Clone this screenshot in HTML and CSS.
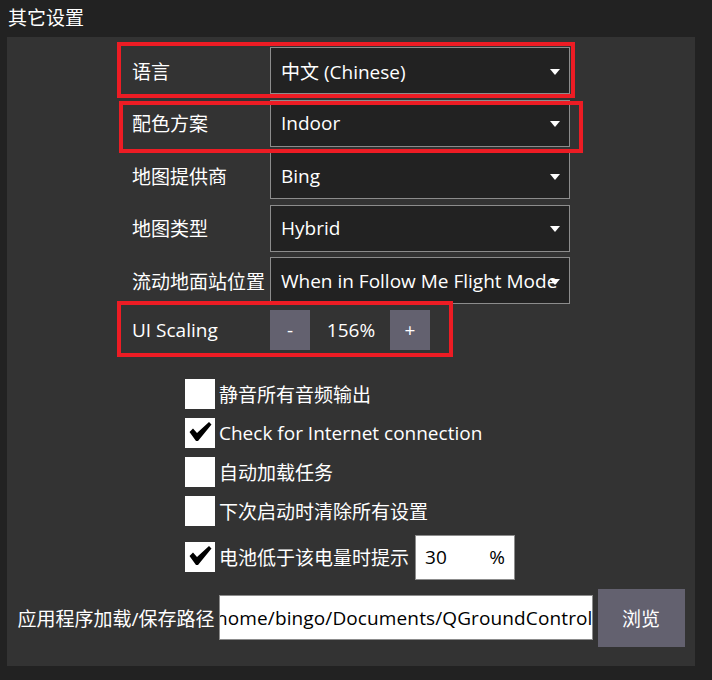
FILE: index.html
```html
<!DOCTYPE html>
<html>
<head>
<meta charset="utf-8">
<link rel="stylesheet" href="styles.css">
</head>
<body>
<div class="page">
  <div class="title">其它设置</div>
  <div class="panel">
    <div class="form">
      <div class="label">语言</div>
      <div class="combo"><span class="combo-text">中文 (Chinese)</span><svg class="arrow" viewBox="0 0 10 6"><polygon points="0,0 10,0 5,6"/></svg></div>
      <div class="label">配色方案</div>
      <div class="combo"><span class="combo-text">Indoor</span><svg class="arrow" viewBox="0 0 10 6"><polygon points="0,0 10,0 5,6"/></svg></div>
      <div class="label">地图提供商</div>
      <div class="combo"><span class="combo-text">Bing</span><svg class="arrow" viewBox="0 0 10 6"><polygon points="0,0 10,0 5,6"/></svg></div>
      <div class="label">地图类型</div>
      <div class="combo"><span class="combo-text">Hybrid</span><svg class="arrow" viewBox="0 0 10 6"><polygon points="0,0 10,0 5,6"/></svg></div>
      <div class="label">流动地面站位置</div>
      <div class="combo"><span class="combo-text">When in Follow Me Flight Mode</span><svg class="arrow" viewBox="0 0 10 6"><polygon points="0,0 10,0 5,6"/></svg></div>
      <div class="label">UI Scaling</div>
      <div class="scale">
        <div class="btn sq">-</div>
        <div class="scale-value">156%</div>
        <div class="btn sq">+</div>
      </div>
    </div>

    <div class="checks">
      <div class="check"><span class="box"></span><span class="check-text">静音所有音频输出</span></div>
      <div class="check"><span class="box"><svg class="tick" viewBox="0 0 30 30"><polygon points="4.5,14 8,10.5 12,15 24,4 26.5,6.5 13,23 11,23"/></svg></span><span class="check-text">Check for Internet connection</span></div>
      <div class="check"><span class="box"></span><span class="check-text">自动加载任务</span></div>
      <div class="check"><span class="box"></span><span class="check-text">下次启动时清除所有设置</span></div>
      <div class="check battery"><span class="box"><svg class="tick" viewBox="0 0 30 30"><polygon points="4.5,14 8,10.5 12,15 24,4 26.5,6.5 13,23 11,23"/></svg></span><span class="check-text">电池低于该电量时提示</span>
        <div class="num"><span>30</span><span>%</span></div>
      </div>
    </div>

    <div class="pathrow">
      <div class="path-label">应用程序加载/保存路径</div>
      <div class="path-input"><span>/home/bingo/Documents/QGroundControl</span></div>
      <div class="btn browse">浏览</div>
    </div>
  </div>

  <div class="mark m1"></div>
  <div class="mark m2"></div>
  <div class="mark m3"></div>
</div>
</body>
</html>
```

FILE: styles.css
```css
* { box-sizing: border-box; }

html, body {
  margin: 0;
  padding: 0;
  background: #222222;
}

body {
  font-family: "Open Sans", "Noto Sans CJK SC", sans-serif;
  font-size: 19px;
  color: #ffffff;
}

.page {
  position: relative;
  width: 712px;
  height: 680px;
  overflow: hidden;
  background: #222222;
}

.title {
  height: 37px;
  padding-left: 8px;
  line-height: 37px;
}

.panel {
  margin-left: 7px;
  width: 688px;
  height: 629px;
  background: #333333;
  padding-top: 10px;
  display: flex;
  flex-direction: column;
  align-items: center;
}

.form {
  display: grid;
  grid-template-columns: 134px 300px;
  grid-template-rows: 47px 47px 47px 47px 47px 40px;
  column-gap: 4px;
  row-gap: 5.5px;
  align-items: center;
}

.label {
  white-space: nowrap;
}

.combo {
  position: relative;
  height: 47px;
  background: #222222;
  border: 1px solid #8c8c8c;
  display: flex;
  align-items: center;
  padding-left: 10px;
  white-space: nowrap;
  overflow: hidden;
}

.arrow {
  position: absolute;
  right: 9px;
  top: 50%;
  width: 10px;
  height: 6px;
  margin-top: -2px;
  fill: #ffffff;
}

.scale {
  display: flex;
  align-items: center;
  height: 40px;
}

.btn {
  background: #63616f;
  color: #ffffff;
  display: flex;
  align-items: center;
  justify-content: center;
}

.sq {
  width: 40px;
  height: 40px;
}

.scale-value {
  width: 80px;
  text-align: center;
  padding-left: 2px;
}

.checks {
  margin-top: 29px;
  width: 332px;
  display: flex;
  flex-direction: column;
  gap: 9px;
}

.check {
  display: flex;
  align-items: center;
  height: 30px;
  white-space: nowrap;
}

.check.battery {
  height: 45px;
}

.box {
  width: 30px;
  height: 30px;
  background: #ffffff;
  margin-right: 4px;
  flex: none;
  display: block;
}

.tick {
  display: block;
  width: 30px;
  height: 30px;
  fill: #000000;
}

.num {
  margin-left: 6px;
  width: 100px;
  height: 45px;
  background: #ffffff;
  border: 1px solid #8c8c8c;
  color: #000000;
  display: flex;
  align-items: center;
  justify-content: space-between;
  padding: 0 9px 0 9px;
}

.pathrow {
  margin-top: 9px;
  display: flex;
  align-items: center;
  height: 58px;
}

.path-label {
  width: 201px;
  white-space: nowrap;
}

.path-input {
  width: 374px;
  height: 45px;
  background: #ffffff;
  border: 1px solid #8c8c8c;
  color: #000000;
  display: flex;
  align-items: center;
  justify-content: flex-end;
  overflow: hidden;
  white-space: nowrap;
}

.path-input span {
  flex: none;
  margin-right: -1px;
  letter-spacing: 0.12px;
}

.browse {
  margin-left: 5px;
  width: 87px;
  height: 58px;
}

.mark {
  position: absolute;
  border: 4px solid #ed1c24;
}

.m1 { left: 117px; top: 42px; width: 458px; height: 56px; }
.m2 { left: 119px; top: 101px; width: 464px; height: 52px; }
.m3 { left: 117px; top: 301px; width: 336px; height: 56px; }
```
